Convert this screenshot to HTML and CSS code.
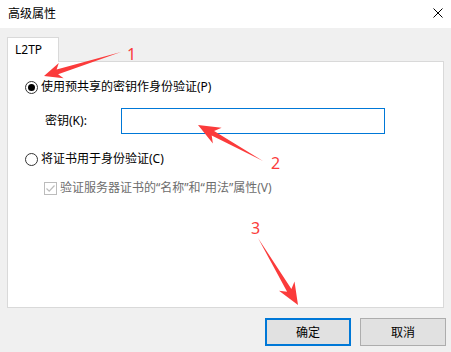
FILE: index.html
```html
<!DOCTYPE html>
<html lang="zh-CN">
<head>
    <meta charset="UTF-8">
    <meta name="viewport" content="width=device-width, initial-scale=1.0">
    <title>高级属性</title>
    <link rel="stylesheet" href="styles.css">
</head>
<body>
    <div class="window">
        <div class="titlebar">
            <span class="title">高级属性</span>
            <svg class="close" viewBox="0 0 10 10"><path d="M0.5 0.5L9.5 9.5M9.5 0.5L0.5 9.5"/></svg>
        </div>

        <div class="content">
            <div class="tabs">
                <div class="tab active">L2TP</div>
            </div>
            <div class="panel">
                <label class="option first">
                    <span class="radio checked"></span>
                    <span>使用预共享的密钥作身份验证(P)</span>
                </label>
                <div class="field">
                    <span class="field-label">密钥(K):</span>
                    <input class="key-input" type="text">
                </div>
                <label class="option second">
                    <span class="radio"></span>
                    <span>将证书用于身份验证(C)</span>
                </label>
                <label class="check disabled">
                    <span class="checkbox">
                        <svg viewBox="0 0 11 11"><path d="M1.5 5.5L4.2 8.2L9.5 2.5"/></svg>
                    </span>
                    <span>验证服务器证书的“名称”和“用法”属性(V)</span>
                </label>
            </div>
            <div class="buttons">
                <button class="btn primary">确定</button>
                <button class="btn">取消</button>
            </div>
        </div>

        <!-- annotation arrows drawn over the dialog -->
        <svg class="marks" viewBox="0 0 451 352">
            <polygon points="121,52 56.6,69.4 58.8,63 44,76 63.6,78.3 58.1,74.2"/>
            <text x="127" y="60">1</text>
            <polygon points="263,161 214.1,131.1 221.6,127.8 198,125 212.9,143.5 211.7,135.4"/>
            <text x="271" y="169">2</text>
            <polygon points="258,238 291.4,289.1 294.5,281.5 298,305 279,290.7 287.1,291.7"/>
            <text x="251" y="234">3</text>
        </svg>
    </div>
</body>
</html>
```

FILE: styles.css
```css
* {
    box-sizing: border-box;
}
body {
    margin: 0;
    font-family: "Noto Sans", "Noto Sans CJK SC", sans-serif;
    font-size: 12px;
    color: #000;
    background-color: #f0f0f0;
}
.window {
    position: relative;
    width: 451px;
    height: 352px;
}
.titlebar {
    height: 28px;
    background-color: #fff;
    display: flex;
    align-items: center;
    justify-content: space-between;
    padding: 0 8px;
}
.title {
    line-height: 16px;
}
.close {
    width: 10px;
    height: 10px;
    margin-bottom: 2px;
    fill: none;
    stroke: #000;
    stroke-width: 1;
}
.content {
    padding: 9px 5px 0 7px;
}
.tabs {
    display: flex;
}
.tab {
    position: relative;
    z-index: 1;
    width: 52px;
    height: 25px;
    margin-bottom: -1px;
    padding-left: 7px;
    background-color: #fff;
    border: 1px solid #d9d9d9;
    border-bottom: none;
    display: flex;
    align-items: center;
    line-height: 16px;
}
.panel {
    width: 437px;
    height: 247px;
    background-color: #fff;
    border: 1px solid #d9d9d9;
    padding: 15px 0 0 17px;
    display: flex;
    flex-direction: column;
}
.option, .check {
    display: flex;
    align-items: center;
    height: 20px;
    line-height: 16px;
}
.option.second {
    margin-top: 15px;
}
.radio {
    width: 13px;
    height: 13px;
    margin-right: 3px;
    border: 1px solid #333;
    border-radius: 50%;
    display: flex;
    align-items: center;
    justify-content: center;
}
.radio.checked::after {
    content: "";
    width: 7px;
    height: 7px;
    border-radius: 50%;
    background-color: #000;
}
.field {
    display: flex;
    align-items: center;
    height: 26px;
    margin-top: 11px;
    padding-left: 20px;
    line-height: 16px;
}
.field-label {
    width: 76px;
}
.key-input {
    width: 264px;
    height: 26px;
    margin: 0;
    padding: 0 4px;
    border: 1px solid #0078d7;
    outline: none;
    font: inherit;
}
.check {
    margin-top: 9px;
    padding-left: 19px;
}
.checkbox {
    width: 13px;
    height: 13px;
    margin-right: 3px;
    border: 1px solid #bcbcbc;
    display: flex;
    align-items: center;
    justify-content: center;
}
.checkbox svg {
    width: 11px;
    height: 11px;
    fill: none;
    stroke: #bcbcbc;
    stroke-width: 1.2;
}
.check.disabled {
    color: #6d6d6d;
}
.buttons {
    display: flex;
    justify-content: flex-end;
    gap: 9px;
    margin-top: 10px;
}
.btn {
    width: 86px;
    height: 28px;
    padding: 0;
    background-color: #e1e1e1;
    border: 1px solid #adadad;
    font-family: inherit;
    font-size: 12px;
    color: #000;
}
.btn.primary {
    border: 2px solid #0078d7;
}
.marks {
    position: absolute;
    left: 0;
    top: 0;
    width: 451px;
    height: 352px;
    pointer-events: none;
}
.marks polygon {
    fill: #fb3b3b;
}
.marks text {
    fill: #fb3b3b;
    font-family: "Noto Sans", sans-serif;
    font-size: 16px;
}
```
